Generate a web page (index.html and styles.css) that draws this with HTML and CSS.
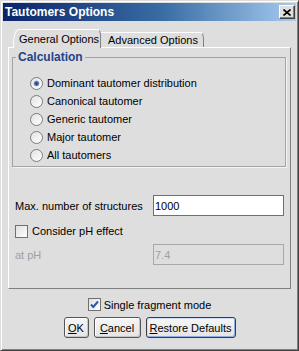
FILE: index.html
```html
<!DOCTYPE html>
<html lang="en">
<head>
  <meta charset="UTF-8" />
  <title>Tautomers Options</title>
  <link rel="stylesheet" href="styles.css">
</head>
<body>

  <div class="window">
    <div class="titlebar">
      <span class="title">Tautomers Options</span>
      <button class="close">
        <svg width="8" height="7" viewBox="0 0 8 7"><path d="M0.5 0.5 L7.5 6.5 M7.5 0.5 L0.5 6.5" stroke="#000" stroke-width="1.6" fill="none"/></svg>
      </button>
    </div>

    <div class="content">
      <div class="tabs">
        <div class="tab active">General Options</div>
        <div class="tab">Advanced Options</div>
      </div>

      <div class="panel">
        <fieldset class="group">
          <legend>Calculation</legend>
          <div class="radio-row"><span class="radio checked"></span>Dominant tautomer distribution</div>
          <div class="radio-row"><span class="radio"></span>Canonical tautomer</div>
          <div class="radio-row"><span class="radio"></span>Generic tautomer</div>
          <div class="radio-row"><span class="radio"></span>Major tautomer</div>
          <div class="radio-row"><span class="radio"></span>All tautomers</div>
        </fieldset>

        <div class="field-row">
          <span class="label">Max. number of structures</span>
          <input type="text" value="1000">
        </div>

        <div class="check-row"><span class="check"></span>Consider pH effect</div>

        <div class="field-row disabled">
          <span class="label">at pH</span>
          <input type="text" value="7.4" disabled>
        </div>
      </div>

      <div class="single">
        <span class="check">
          <svg width="11" height="11" viewBox="0 0 11 11"><path d="M2 5.5 L4.3 8 L9 2.5" stroke="#2f56a8" stroke-width="2" fill="none"/></svg>
        </span>
        Single fragment mode
      </div>

      <div class="buttons">
        <button class="btn ok"><u>O</u>K</button>
        <button class="btn cancel"><u>C</u>ancel</button>
        <button class="btn restore focused"><u>R</u>estore Defaults</button>
      </div>
    </div>
  </div>

</body>
</html>
```

FILE: styles.css
```css
* {
  box-sizing: border-box;
}

body {
  margin: 0;
  font-family: "Liberation Sans", Arial, sans-serif;
  font-size: 11px;
  color: #000;
  background: #dedede;
}

.window {
  width: 299px;
  height: 351px;
  padding: 2px;
  border: 1px solid;
  border-color: #dcdcdc #404040 #404040 #dcdcdc;
  box-shadow: inset 1px 1px #fff, inset -1px -1px #808080;
  background: #dedede;
}

/* Title bar */
.titlebar {
  height: 18px;
  display: flex;
  align-items: center;
  justify-content: space-between;
  padding: 0 1px 0 2px;
  background: linear-gradient(to right, #0a246a 0%, #3a6ea5 55%, #a6caf0 100%);
}

.title {
  color: #fff;
  font-weight: bold;
  font-size: 12px;
}

.close {
  width: 16px;
  height: 14px;
  padding: 0;
  display: flex;
  align-items: center;
  justify-content: center;
  background: #dedede;
  border: 1px solid;
  border-color: #fff #404040 #404040 #fff;
  box-shadow: inset -1px -1px #808080;
}

/* Tabs */
.content {
  padding: 8px 5px 0 5px;
}

.tabs {
  display: flex;
  align-items: flex-end;
  height: 18px;
  padding-left: 5px;
}

.tab {
  height: 15px;
  display: flex;
  align-items: center;
  width: 103px;
  padding-left: 7px;
  border-top: 1px solid #fff;
  border-right: 1px solid #808080;
  border-top-right-radius: 3px 8px;
  white-space: nowrap;
}

.tab.active {
  position: relative;
  z-index: 1;
  width: 88px;
  height: 19px;
  margin-bottom: -1px;
  padding-left: 5px;
  background: #dedede;
  border-left: 1px solid #fff;
  border-top-left-radius: 6px 15px;
}

.panel {
  height: 242px;
  padding: 0 6px;
  border: 1px solid;
  border-color: #fff #808080 #808080 #fff;
}

/* Calculation group */
.group {
  margin: 2px -2px 0 -3px;
  padding: 10px 0 2px 3px;
  border: 1px solid #a3a3a3;
  box-shadow: 1px 1px 0 #f4f4f4;
}

.group legend {
  padding: 0 2px;
  line-height: 14px;
  font-size: 12px;
  font-weight: bold;
  color: #22448a;
}

.radio-row {
  height: 18px;
  display: flex;
  align-items: center;
  padding-left: 14px;
}

.radio {
  width: 13px;
  height: 13px;
  margin-right: 4px;
  border-radius: 50%;
  border: 1px solid #7c7c7c;
  background: linear-gradient(135deg, #e2e2e2, #fff);
}

.radio.checked {
  background:
    radial-gradient(circle, #233f86 0, #4f6cb0 2px, rgba(255,255,255,0) 3.2px),
    linear-gradient(135deg, #e2e2e2, #fff);
}

/* Fields */
.field-row {
  display: grid;
  grid-template-columns: 138px 131px;
  align-items: center;
  height: 21px;
  margin-top: 28px;
}

.field-row input {
  height: 21px;
  margin: 0;
  padding: 0 1px;
  font-family: inherit;
  font-size: 11px;
  color: #000;
  background: #fff;
  border: 1px solid #6f6f6f;
  outline: none;
}

.field-row.disabled {
  margin-top: 6px;
  color: #a0a0a0;
}

.field-row.disabled input {
  color: #a0a0a0;
  background: #dedede;
  border-color: #a8a8a8;
}

.check-row {
  height: 14px;
  display: flex;
  align-items: center;
  margin-top: 8px;
}

.check {
  width: 13px;
  height: 13px;
  margin-right: 4px;
  display: flex;
  align-items: center;
  justify-content: center;
  border: 1px solid #707070;
  background: linear-gradient(135deg, #e0e0e0, #fff);
}

/* Bottom */
.single {
  height: 13px;
  display: flex;
  align-items: center;
  justify-content: center;
  margin-top: 9px;
}

.single .check {
  margin-right: 3px;
}

.buttons {
  display: flex;
  justify-content: center;
  gap: 5px;
  margin-top: 6px;
}

.btn {
  height: 21px;
  padding: 0;
  font-family: inherit;
  font-size: 11px;
  color: #000;
  background: linear-gradient(#f6f6f6, #e4e4e4);
  border: 1px solid #555;
  border-radius: 3px;
  box-shadow: inset 1px 1px #fff, inset -1px -1px #c4c4c4;
}

.btn.ok { width: 25px; }
.btn.cancel { width: 47px; }
.btn.restore { width: 90px; }

.btn.focused {
  border-color: #3c3c3c;
  box-shadow: inset 1px 1px #cfdcf5, inset -1px -1px #90aee3;
}
```
